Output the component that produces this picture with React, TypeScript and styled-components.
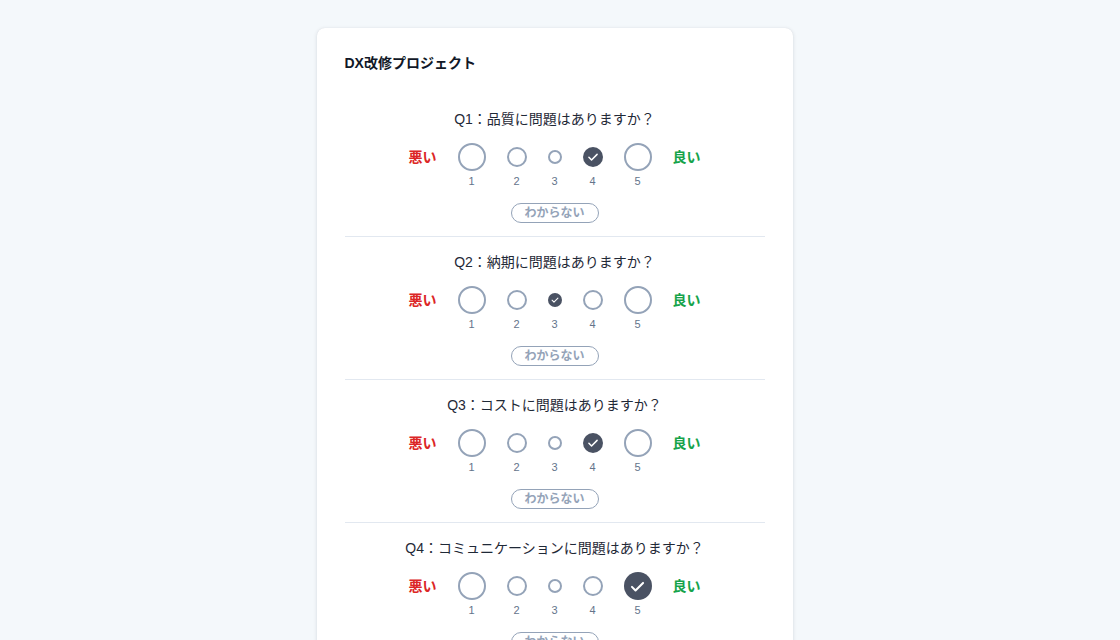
import React from 'react';
import styled, { createGlobalStyle } from 'styled-components';

const GlobalStyle = createGlobalStyle`
  html, body {
    margin: 0;
    padding: 0;
    background: #f4f8fb;
  }
  body {
    font-family: "Liberation Sans", "Noto Sans CJK JP", sans-serif;
    color: #1f2937;
  }
`;

const Page = styled.div`
  min-height: 100vh;
  padding: 28px 11px 40px 0;
  box-sizing: border-box;
  display: flex;
  justify-content: center;
  align-items: flex-start;
`;

const Card = styled.div`
  width: 476px;
  box-sizing: border-box;
  background: #ffffff;
  border-radius: 8px;
  box-shadow: 0 1px 4px rgba(15, 23, 42, 0.12), 0 0 1px rgba(15, 23, 42, 0.1);
  padding: 25px 28px 20px;
`;

const Title = styled.h1`
  margin: 0 0 21px;
  font-size: 14px;
  line-height: 20px;
  font-weight: 700;
  color: #111827;
`;

const Section = styled.section<{ $last?: boolean }>`
  display: flex;
  flex-direction: column;
  align-items: center;
  padding: 15px 0 13px;
  border-bottom: ${({ $last }) => ($last ? 'none' : '1px solid #e2e8f0')};
`;

const Question = styled.div`
  font-size: 14px;
  line-height: 20px;
  color: #1f2937;
  margin-bottom: 14px;
`;

const ScaleRow = styled.div`
  display: flex;
  align-items: flex-start;
  gap: 21px;
`;

const EndLabel = styled.span<{ $tone: 'bad' | 'good' }>`
  font-size: 14px;
  line-height: 28px;
  font-weight: 700;
  color: ${({ $tone }) => ($tone === 'bad' ? '#dc2626' : '#16a34a')};
`;

const Option = styled.label`
  display: flex;
  flex-direction: column;
  align-items: center;
  gap: 3px;
  cursor: pointer;
`;

const CircleSlot = styled.div`
  height: 28px;
  display: flex;
  align-items: center;
  justify-content: center;
`;

const Circle = styled.span<{ $size: number; $checked: boolean }>`
  width: ${({ $size }) => $size}px;
  height: ${({ $size }) => $size}px;
  box-sizing: border-box;
  border-radius: 50%;
  border: ${({ $checked }) => ($checked ? 'none' : '2px solid #94a3b8')};
  background: ${({ $checked }) => ($checked ? '#4a5263' : '#ffffff')};
  display: flex;
  align-items: center;
  justify-content: center;
`;

const Num = styled.span`
  font-size: 11px;
  line-height: 14px;
  color: #64748b;
`;

const UnknownButton = styled.button`
  margin-top: 15px;
  width: 88px;
  height: 20px;
  padding: 0;
  border: 1px solid #94a3b8;
  border-radius: 999px;
  background: #ffffff;
  color: #94a3b8;
  font-family: "Liberation Sans", "Noto Sans CJK JP", sans-serif;
  font-size: 12px;
  font-weight: 700;
  line-height: 18px;
  cursor: pointer;
`;

const sizes = [28, 20, 14, 20, 28];

const questions = [
  { text: 'Q1：品質に問題はありますか？', value: 4 },
  { text: 'Q2：納期に問題はありますか？', value: 3 },
  { text: 'Q3：コストに問題はありますか？', value: 4 },
  { text: 'Q4：コミュニケーションに問題はありますか？', value: 5 },
  { text: 'Q5：総合的に満足していますか？', value: 0 },
];

const Check: React.FC<{ size: number }> = ({ size }) => {
  const s = Math.round(size * 0.68);
  return (
    <svg width={s} height={s} viewBox="0 0 24 24" fill="none">
      <path d="M5 12.5l4.5 4.5L19 7.5" stroke="#ffffff" strokeWidth={2.6} strokeLinecap="round" strokeLinejoin="round" />
    </svg>
  );
};

const App: React.FC = () => {
  return (
    <>
      <GlobalStyle />
      <Page>
        <Card>
          <Title>DX改修プロジェクト</Title>
          {questions.map((q, qi) => (
            <Section key={q.text} $last={qi === questions.length - 1}>
              <Question>{q.text}</Question>
              <ScaleRow>
                <EndLabel $tone="bad">悪い</EndLabel>
                {sizes.map((size, i) => {
                  const checked = q.value === i + 1;
                  return (
                    <Option key={i}>
                      <CircleSlot>
                        <Circle $size={size} $checked={checked}>
                          {checked && <Check size={size} />}
                        </Circle>
                      </CircleSlot>
                      <Num>{i + 1}</Num>
                    </Option>
                  );
                })}
                <EndLabel $tone="good">良い</EndLabel>
              </ScaleRow>
              <UnknownButton>わからない</UnknownButton>
            </Section>
          ))}
        </Card>
      </Page>
    </>
  );
};

export default App;
